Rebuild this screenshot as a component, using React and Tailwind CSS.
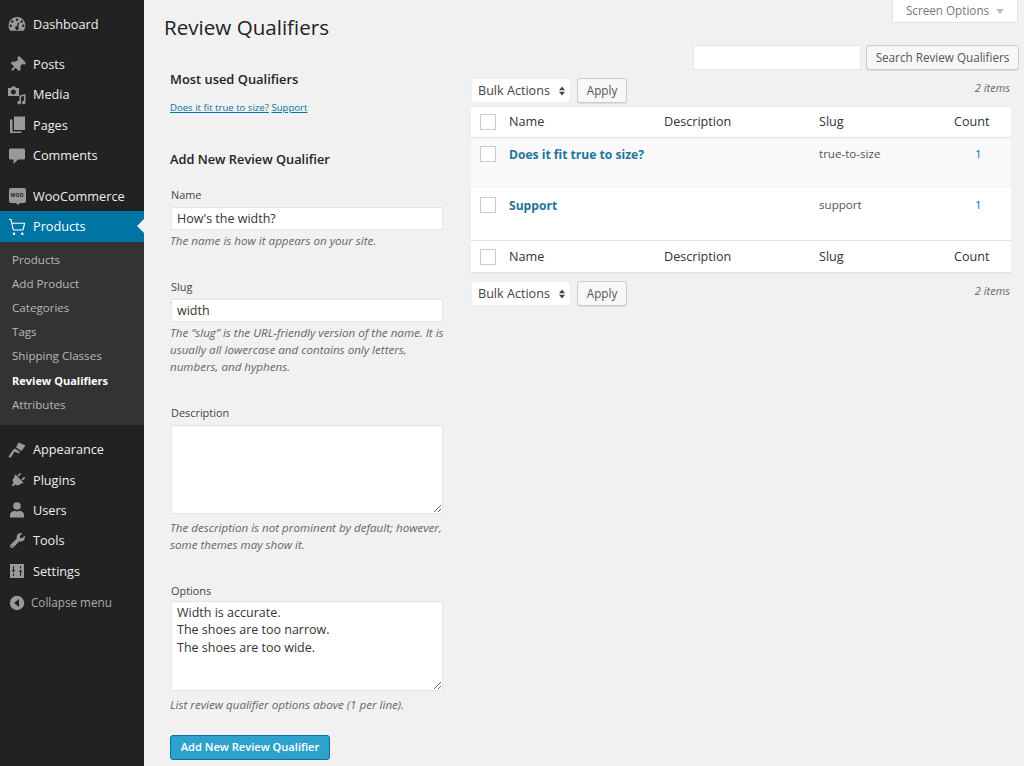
import React from 'react';
import { ShoppingCart } from 'lucide-react';
import { FaThumbtack, FaPlug, FaWrench } from 'react-icons/fa';

const Dashboard = () => (
  <svg viewBox="0 0 20 20" className="w-[20px] h-[20px]" fill="currentColor">
    <path fillRule="evenodd" d="M10 3a8.5 8.5 0 0 0-8.5 8.5c0 2 .7 3.8 1.9 5.2h13.2a8.5 8.5 0 0 0 1.9-5.2A8.500 8.500 0 0 0 10 3zM10 4.500a1.200 1.200 0 1 1 0 2.400 1.200 1.200 0 0 1 0-2.400zM5.300 6.300a1.200 1.200 0 1 1 0 2.400 1.200 1.200 0 0 1 0-2.400zM14.700 6.300a1.200 1.200 0 1 1 0 2.400 1.200 1.200 0 0 1 0-2.400zM3.700 10.500a1.200 1.200 0 1 1 0 2.400 1.200 1.200 0 0 1 0-2.400zM16.300 10.500a1.200 1.200 0 1 1 0 2.400 1.200 1.200 0 0 1 0-2.400zM11.500 8l1 .4-1.300 4.300a1.800 1.800 0 1 1-1.500-.4z" />
  </svg>
);

const Media = () => (
  <svg viewBox="0 0 20 20" className="w-[20px] h-[20px]" fill="currentColor">
    <path fillRule="evenodd" d="M1 3h3l1-1.500h3L9 3h3v8H1zM6.500 4.500a2.500 2.500 0 1 0 0 5 2.500 2.500 0 0 0 0-5z" />
    <path d="M12.500 10.500 18.500 9v8.500a1.800 1.800 0 1 1-1.500-1.800v-4.700l-3 .8v5.700a1.800 1.800 0 1 1-1.500-1.700z" />
  </svg>
);

const Pages = () => (
  <svg viewBox="0 0 20 20" className="w-[20px] h-[20px]" fill="currentColor">
    <path d="M7 1.500h11v13.500H7z" />
    <path d="M5.500 4.500v12h9V18H3V4.500z" />
  </svg>
);

const Comments = () => (
  <svg viewBox="0 0 20 20" className="w-[20px] h-[20px]" fill="currentColor">
    <path d="M3.500 2.500h13a1.500 1.500 0 0 1 1.500 1.500v8a1.500 1.500 0 0 1-1.500 1.500H11L6.500 18v-4.500h-3A1.500 1.500 0 0 1 2 12V4a1.500 1.500 0 0 1 1.500-1.500z" />
  </svg>
);

const Woo = () => (
  <span className="relative flex items-center justify-center w-[17px] h-[15px] rounded-[2px] bg-[#999] text-[#222] text-[5px] font-bold leading-none mb-[2px]">
    WOO
    <span className="absolute left-[7px] top-[15px] border-x-[2px] border-t-[2px] border-x-transparent border-t-[#999]" />
  </span>
);

// the hammer-like brush from the reference, head at the top right
const Appearance = () => (
  <svg viewBox="0 0 20 20" className="w-[20px] h-[20px]" fill="currentColor">
    <path d="M11.500 2.500 18.500 5.500 14.500 11 9 7.500z" />
    <path d="M8 8.500 13 12 11.500 13.500 7.500 11.500 3.500 18 1.500 16.500 6 10z" />
  </svg>
);

const Users = () => (
  <svg viewBox="0 0 20 20" className="w-[20px] h-[20px]" fill="currentColor">
    <circle cx="10" cy="6" r="3.800" />
    <path d="M3 17.500v-2.500c0-2.500 2.500-4 4.500-4.200 1.500.8 3.500.8 5 0 2 .2 4.500 1.700 4.500 4.200v2.500z" />
  </svg>
);

const Settings = () => (
  <svg viewBox="0 0 20 20" className="w-[20px] h-[20px]" fill="currentColor">
    <path fillRule="evenodd" d="M3 3h14v14H3zM6 5v4H4.800l1.700 2.500L8.200 9H7V5zM6 12.500V15h1v-2.500zM13 5v2.500h1V5zM13.500 8.500 11.800 11H13v4h1v-4h1.200z" />
  </svg>
);

const Collapse = () => (
  <svg viewBox="0 0 20 20" className="w-[16px] h-[16px]" fill="currentColor">
    <path fillRule="evenodd" d="M10 1a9 9 0 1 1 0 18 9 9 0 0 1 0-18zM12.500 5 6.500 10l6 5z" />
  </svg>
);

const MenuItem = ({ icon, label, active }) => (
  <div className={`relative flex items-center h-[30.4px] text-[12.7px] ${active ? 'bg-[#0074a2] text-white' : 'text-[#eee]'}`}>
    <span className={`flex items-center justify-center w-[33px] pl-[1px] ${active ? 'text-white' : 'text-[#999]'}`}>{icon}</span>
    <span>{label}</span>
    {active && (
      <span className="absolute right-0 top-[8px] border-y-[7px] border-r-[7px] border-y-transparent border-r-[#f1f1f1]" />
    )}
  </div>
);

const submenu = ['Products', 'Add Product', 'Categories', 'Tags', 'Shipping Classes', 'Review Qualifiers', 'Attributes'];

const Sidebar = () => (
  <aside className="w-[144px] shrink-0 bg-[#222] pt-[9px]">
    <MenuItem icon={<Dashboard />} label="Dashboard" />
    <div className="mt-[10px]">
      <MenuItem icon={<FaThumbtack size={16} className="rotate-45" />} label="Posts" />
      <MenuItem icon={<Media />} label="Media" />
      <MenuItem icon={<Pages />} label="Pages" />
      <MenuItem icon={<Comments />} label="Comments" />
    </div>
    <div className="mt-[10px]">
      <MenuItem icon={<Woo />} label="WooCommerce" />
      <MenuItem icon={<ShoppingCart size={18} strokeWidth={1.5} />} label="Products" active />
    </div>
    <ul className="bg-[#333] pt-[6px] pb-[8px] text-[11.6px]">
      {submenu.map((item) => (
        <li key={item} className={`h-[24.2px] leading-[24px] pl-[12px] ${item === 'Review Qualifiers' ? 'text-white font-bold text-[11px]' : 'text-[#b4b9be]'}`}>
          {item}
        </li>
      ))}
    </ul>
    <div className="mt-[9.4px]">
      <MenuItem icon={<Appearance />} label="Appearance" />
      <MenuItem icon={<FaPlug size={15} className="rotate-45" />} label="Plugins" />
      <MenuItem icon={<Users />} label="Users" />
      <MenuItem icon={<FaWrench size={15} />} label="Tools" />
      <MenuItem icon={<Settings />} label="Settings" />
      <div className="flex items-center h-[30.4px] mt-[1px] text-[11.7px] text-[#aaa]">
        <span className="flex items-center justify-center w-[31px] pl-[3px] text-[#999]"><Collapse /></span>
        <span>Collapse menu</span>
      </div>
    </div>
  </aside>
);

const Field = ({ label, hint, className, children }) => (
  <div className={className}>
    <label className="block -mt-[1px] mb-[1px] text-[10.9px] leading-[17px] text-[#444] pl-[1px]">{label}</label>
    {children}
    <p className="mt-[2px] text-[11.6px] leading-[17px] italic text-[#666]">{hint}</p>
  </div>
);

const inputClass = 'block bg-white border border-[#e5e5e5] text-[12.5px] text-[#333] outline-none';

const AddForm = () => (
  <div className="w-[275px] shrink-0 pt-[25px]">
    <h3 className="text-[12.9px] leading-[18px] font-semibold text-[#222]">Most used Qualifiers</h3>
    <p className="mt-[13px] text-[9.6px] leading-[14px] text-[#0074a2]">
      <a className="underline">Does it fit true to size?</a> <a className="underline">Support</a>
    </p>
    <h3 className="mt-[35px] text-[12.8px] leading-[18px] font-semibold text-[#222]">Add New Review Qualifier</h3>
    <Field label="Name" hint="The name is how it appears on your site." className="mt-[19px]">
      <input
        readOnly
        value="How's the width?"
        className={`${inputClass} mt-[4px] mb-[2px] ml-[1px] w-[272px] h-[23px] px-[5px]`}
      />
    </Field>
    <Field
      label="Slug"
      hint="The “slug” is the URL-friendly version of the name. It is usually all lowercase and contains only letters, numbers, and hyphens."
      className="mt-[30px]"
    >
      <input readOnly value="width" className={`${inputClass} mt-[4px] mb-[2px] ml-[1px] w-[272px] h-[23px] px-[5px]`} />
    </Field>
    <Field
      label="Description"
      hint="The description is not prominent by default; however, some themes may show it."
      className="mt-[30px]"
    >
      <textarea readOnly className={`${inputClass} mt-[4px] mb-[5px] ml-[1px] w-[272px] h-[89px]`} />
    </Field>
    <Field label="Options" hint="List review qualifier options above (1 per line)." className="mt-[30px]">
      <textarea
        readOnly
        value={'Width is accurate.\nThe shoes are too narrow.\nThe shoes are too wide.'}
        className={`${inputClass} mt-[2px] mb-[5px] ml-[1px] w-[272px] h-[90px] px-[5px] py-[2px] leading-[17.4px]`}
      />
    </Field>
    <button className="block mt-[22px] w-[160px] h-[25px] rounded-[3px] bg-[#2ea2cc] border border-[#0074a2] text-white text-[11.1px] font-semibold">
      Add New Review Qualifier
    </button>
  </div>
);

const Button = ({ children, className }) => (
  <button className={`bg-[#f7f7f7] border border-[#ccc] rounded-[3px] shadow-[0_1px_0_#ddd] text-[#555] text-[11.7px] ${className}`}>
    {children}
  </button>
);

const TableNav = ({ className }) => (
  <div className={`flex items-center h-[25px] ${className}`}>
    <div className="flex items-center justify-between w-[100px] h-[25px] pl-[6px] pr-[5px] pt-[1px] bg-white rounded-[4px] border border-[#eee] text-[12.6px] text-[#444]">
      Bulk Actions
      <svg viewBox="0 0 8 12" className="w-[6px] h-[10px]" fill="#444">
        <path d="M4 0 8 5H0zM0 7h8l-4 5z" />
      </svg>
    </div>
    <Button className="ml-[6px] w-[50px] h-[25px]">Apply</Button>
    <span className="ml-auto mr-[1px] -mt-[4px] text-[11px] italic text-[#666]">2 items</span>
  </div>
);

const Check = () => (
  <input type="checkbox" readOnly className="appearance-none block ml-[9px] w-[16px] h-[16px] bg-white border border-[#ccc]" />
);

const grid = 'grid grid-cols-[38px_155px_155px_135px_1fr]';

const HeaderRow = ({ className }) => (
  <div className={`${grid} items-center text-[12.6px] text-[#333] ${className}`}>
    <Check />
    <span>Name</span>
    <span>Description</span>
    <span>Slug</span>
    <span>Count</span>
  </div>
);

const Row = ({ name, slug, className }) => (
  <div className={`${grid} items-start ${className}`}>
    <Check />
    <a className="text-[12.1px] leading-[18px] font-bold text-[#21759b]">{name}</a>
    <span />
    <span className="text-[11.6px] leading-[15px] text-[#555]">{slug}</span>
    <span className="text-[11.6px] leading-[15px] text-[#0074a2] pl-[21px]">1</span>
  </div>
);

const Terms = () => (
  <div className="w-[540px] ml-[26px]">
    <div className="flex justify-end gap-[5px] mr-[-8px]">
      <input readOnly className={`${inputClass} w-[168px] h-[25px]`} />
      <Button className="w-[153px] h-[25px]">Search Review Qualifiers</Button>
    </div>
    <TableNav className="mt-[8px]" />
    <div className="mt-[3px] bg-white border-y border-[#e5e5e5] shadow-[0_1px_1px_rgba(0,0,0,0.04)]">
      <HeaderRow className="h-[31px] border-b border-[#e1e1e1]" />
      <Row name="Does it fit true to size?" slug="true-to-size" className="h-[50px] pt-[8px] bg-[#f9f9f9]" />
      <Row name="Support" slug="support" className="h-[52px] pt-[9px]" />
      <HeaderRow className="h-[32px] pt-[1px] border-t border-[#e1e1e1]" />
    </div>
    <TableNav className="mt-[8px]" />
  </div>
);

export default function App() {
  return (
    <div className="flex w-[1024px] h-[766px] overflow-hidden bg-[#f1f1f1] font-['Open_Sans',sans-serif]">
      <Sidebar />
      <main className="flex-1">
        <div className="flex justify-between items-start h-[45px]">
          <h1 className="ml-[20px] mt-[11px] text-[20.6px] leading-[32px] text-[#222]">Review Qualifiers</h1>
          <div className="flex items-center justify-center gap-[7px] mr-[6px] w-[126px] h-[23px] bg-white border-x border-b border-[#e5e5e5] text-[11.7px] text-[#777]">
            Screen Options
            <span className="border-x-[4px] border-t-[5px] border-x-transparent border-t-[#bbb]" />
          </div>
        </div>
        <div className="flex pl-[26px]">
          <AddForm />
          <Terms />
        </div>
      </main>
    </div>
  );
}
